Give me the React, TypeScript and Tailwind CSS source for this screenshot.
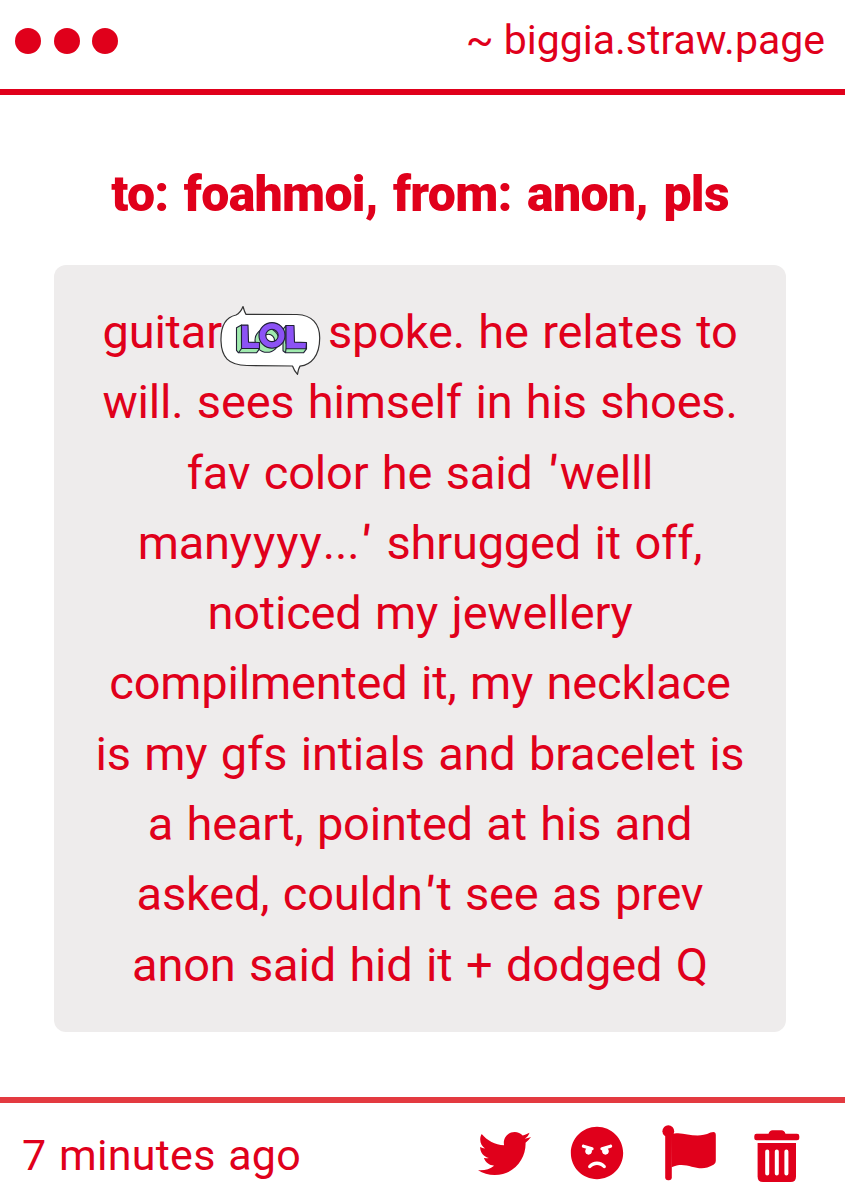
import { FaAngry, FaTwitter } from "react-icons/fa";

const LINES = [
  "will. sees himself in his shoes.",
  "fav color he said 'welll",
  "manyyyy...' shrugged it off,",
  "noticed my jewellery",
  "compilmented it, my necklace",
  "is my gfs intials and bracelet is",
  "a heart, pointed at his and",
  "asked, couldn't see as prev",
  "anon said hid it + dodged Q",
];

function FlagIcon() {
  return (
    <svg viewBox="0 0 54 56" className="h-14 w-[54px]" fill="currentColor">
      <circle cx="6.3" cy="6.2" r="5.9" />
      <rect x="3.2" y="6" width="6.6" height="49.2" rx="3" />
      <path d="M9 9.5C21 4.5 32 15.5 48.5 7.6Q53.8 5.6 53.8 10V36Q53.8 38.6 51.5 39.8C35 49.5 26 34.5 9.6 42.2Z" />
    </svg>
  );
}

function TrashIcon() {
  return (
    <svg viewBox="0 0 46 52" className="h-[52px] w-[46px]" fill="currentColor">
      <path d="M2.5 3.8H14.5Q15.5.3 18.5.3H27.5Q30.5.3 31.5 3.8H43Q45.3 3.8 45.3 6V8.2Q45.3 10.2 43 10.2H2.5Q.3 10.2.3 8.2V6Q.3 3.8 2.5 3.8Z" />
      <path d="M3.6 13H42V46.5Q42 52 36.7 52H9Q3.6 52 3.6 46.5Z" />
      <path d="M13.2 21.5V43.5M22.8 21.5V43.5M32.4 21.5V43.5" stroke="#fff" strokeWidth="4" strokeLinecap="round" />
    </svg>
  );
}

function LolSticker() {
  return (
    <svg viewBox="0 0 102 70" className="absolute -left-[2px] top-[8px] h-[70px] w-[102px]" aria-label="LOL">
      <path
        d="M16 10Q20.5 8 23 1.5Q24.5 7 26 9.3L77 9.5C92 10 99.7 19 99.7 33C99.7 51 91 60 80 61.2Q78.5 63.5 77.5 69.3Q74 65.5 72.5 61L27 60.5C8 60 1.5 52 1 36C.5 19 7 12 16 10Z"
        fill="#fff"
        stroke="#333"
        strokeWidth="1.2"
        strokeLinejoin="round"
      />
      <g transform="translate(-1 .8)" stroke="#1f1f35" strokeWidth="1.1" strokeLinejoin="round">
        <path d="M22.5 19.3L17.5 22V44.5L19.5 47H37.5L40.5 43V37.5H22.5Z" fill="#a0eaae" />
        <path d="M67 19.7L64 23.5V45L66.5 47H84.5L87.5 43V37.5H67Z" fill="#a0eaae" />
        <path
          d="M48 22.5a12 12 0 1 1 0 24a12 12 0 1 1 0-24ZM49.5 28.5a6 6 0 1 0 0 12a6 6 0 1 0 0-12Z"
          fill="#a0eaae"
          fillRule="evenodd"
        />
        <path d="M22.5 19.3H29L29.5 36.3L40.5 36.7V42.7H22.5Z" fill="#8c52f5" />
        <path d="M67 19.7H75L75.5 36.3L87.5 36.7L87 42.9H67Z" fill="#8c52f5" />
        <path
          d="M53 16.8a13 12.8 0 1 1 0 25.6a13 12.8 0 1 1 0-25.6ZM53 23.4a6.2 6.2 0 1 0 0 12.4a6.2 6.2 0 1 0 0-12.4Z"
          fill="#8c52f5"
          fillRule="evenodd"
        />
        <path d="M22.5 42.7L19.5 47M67 42.9L66.5 47" fill="none" />
      </g>
    </svg>
  );
}

function Line({ text }: { text: string }) {
  return (
    <p className="whitespace-nowrap">
      {text.split(/(yyyy|')/).map((part, i) => {
        if (part === "yyyy") {
          return (
            <span key={i} className="tracking-[1px]">
              {part}
            </span>
          );
        }
        if (part === "'") {
          return (
            <span key={i} className="inline-block origin-top -skew-x-6 pl-[6px] font-medium">
              {part}
            </span>
          );
        }
        return part;
      })}
    </p>
  );
}

export default function App() {
  return (
    <div className="flex h-[1200px] w-[845px] flex-col overflow-hidden bg-white font-[Roboto,sans-serif] text-[#e0001b]">
      <header className="flex h-[95px] items-center justify-between border-b-[6px] border-[#e0001b] pb-2 pl-[15px] pr-5">
        <div className="flex gap-[12.5px]">
          <span className="size-[26px] rounded-full bg-[#e0001b]" />
          <span className="size-[26px] rounded-full bg-[#e0001b]" />
          <span className="size-[26px] rounded-full bg-[#e0001b]" />
        </div>
        <span className="-mt-0.5 whitespace-nowrap text-[41px] leading-[46px]">~ biggia.straw.page</span>
      </header>

      <main className="flex h-[1002px] flex-col pl-[54px] pr-[59px] pt-[68px]">
        <h1 className="h-[102px] whitespace-nowrap text-center text-[50px] font-black leading-[62px] tracking-[-0.7px] [word-spacing:3.5px]">
          to: foahmoi, from: anon, pls
        </h1>
        <div className="h-[767px] rounded-xl bg-[#eeecec] py-8 text-center text-[47px] leading-[70.3px] tracking-[-0.2px] [word-spacing:2px]">
          <div className="flex justify-center whitespace-nowrap">
            <span>guitar</span>
            <span className="relative w-[106px]">
              <LolSticker />
            </span>
            <span>spoke. he relates to</span>
          </div>
          {LINES.map((line) => (
            <Line key={line} text={line} />
          ))}
        </div>
      </main>

      <footer className="flex h-[103px] items-start justify-between border-t-[6px] border-[#e33a40] pl-[22px] pr-[45px]">
        <span className="mt-[27px] whitespace-nowrap text-[43px] leading-[50px] tracking-[0.3px] [word-spacing:1.5px]">
          7 minutes ago
        </span>
        <div className="flex items-start">
          <FaTwitter className="mr-[39px] mt-[24px] size-[53px]" />
          <FaAngry className="mr-[38px] mt-[23px] size-[54px]" />
          <div className="mr-[38px] mt-[22px]">
            <FlagIcon />
          </div>
          <div className="mt-[27px]">
            <TrashIcon />
          </div>
        </div>
      </footer>
    </div>
  );
}
